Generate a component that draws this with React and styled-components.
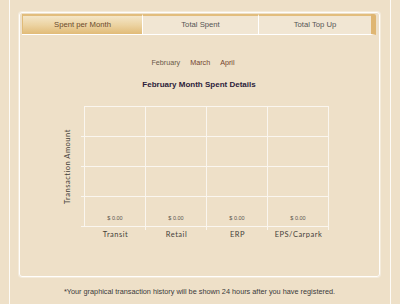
import React, { useState } from "react";
import styled, { createGlobalStyle } from "styled-components";

const GlobalStyle = createGlobalStyle`
  html, body {
    margin: 0;
    padding: 0;
    background: #eee0c8;
    font-family: "Liberation Sans", Arial, sans-serif;
  }
`;

const tabs = ["Spent per Month", "Total Spent", "Total Top Up"];
const months = ["February", "March", "April"];
const categories = ["Transit", "Retail", "ERP", "EPS/Carpark"];

const App = () => {
  const [active, setActive] = useState(0);
  const [month, setMonth] = useState("February");

  return (
    <>
      <GlobalStyle />
      <Page>
        <Frame>
          <Box>
            <TabRow>
              {tabs.map((t, i) => (
                <Tab key={t} $active={active === i} onClick={() => setActive(i)}>
                  {t}
                </Tab>
              ))}
            </TabRow>

            <Months>
              {months.map((m) => (
                <MonthLink
                  key={m}
                  $current={month === m}
                  onClick={() => setMonth(m)}
                >
                  {m}
                </MonthLink>
              ))}
            </Months>

            <Title>{month} Month Spent Details</Title>

            <Chart>
              <AxisLabel>Transaction Amount</AxisLabel>
              <div>
                <Plot>
                  {[0, 1, 2, 3].map((row) =>
                    categories.map((c, col) => (
                      <Cell
                        key={row + c}
                        $bottom={row === 3}
                        $first={col === 0}
                      >
                        {row === 3 && <Value>$ 0.00</Value>}
                      </Cell>
                    ))
                  )}
                </Plot>
                <Labels>
                  {categories.map((c) => (
                    <Label key={c}>{c}</Label>
                  ))}
                </Labels>
              </div>
            </Chart>
          </Box>

          <Note>
            *Your graphical transaction history will be shown 24 hours after
            you have registered.
          </Note>
        </Frame>
      </Page>
    </>
  );
};

const Page = styled.div`
  height: 304px;
  padding: 0 9px;
  box-sizing: border-box;
  display: flex;
`;

const Frame = styled.div`
  flex: 1;
  display: flex;
  flex-direction: column;
  border-left: 1px solid rgba(255, 255, 255, 0.85);
  border-right: 1px solid rgba(255, 255, 255, 0.85);
  padding: 12px 10px 0 9px;
`;

const Box = styled.div`
  height: 262px;
  flex-shrink: 0;
  border: 1px solid rgba(255, 255, 255, 0.95);
  box-shadow: 0 0 0 1px rgba(255, 255, 255, 0.35);
  border-radius: 3px;
  padding: 1px 3px 0 2px;
`;

const TabRow = styled.div`
  display: grid;
  grid-template-columns: 120px 116px 1fr;
  border-right: 5px solid #dfb672;
  border-bottom: 1px solid #fff;
  border-top-right-radius: 2px;
`;

const Tab = styled.div`
  height: 18px;
  border-top: 2px solid #e2bd7d;
  border-left: 1px solid ${(p) => (p.$active ? "#e0bb78" : "#fff")};
  background: ${(p) =>
    p.$active
      ? "linear-gradient(to bottom, #f4e6c8 0%, #ecd3a2 50%, #e1bb77 100%)"
      : "#f1e6d3"};
  color: ${(p) => (p.$active ? "#6a4a2c" : "#555")};
  font-size: 7.7px;
  line-height: 18px;
  text-align: center;
  cursor: pointer;
`;

const Months = styled.div`
  margin-top: 23px;
  display: flex;
  justify-content: center;
  gap: 10px;
  padding-right: 12px;
  font-size: 7.2px;
  line-height: 10px;
`;

const MonthLink = styled.span`
  color: ${(p) => (p.$current ? "#6a5a48" : "#74442f")};
  cursor: pointer;
`;

const Title = styled.div`
  margin-top: 12px;
  text-align: center;
  font-size: 8px;
  font-weight: bold;
  line-height: 10px;
  color: #2c1c3a;
`;

const Chart = styled.div`
  margin-top: 16px;
  display: flex;
  padding-left: 41px;
  gap: 11px;
  font-family: Lato, "DejaVu Sans", sans-serif;
`;

const AxisLabel = styled.div`
  width: 10px;
  height: 121px;
  writing-mode: vertical-rl;
  transform: rotate(180deg);
  text-align: center;
  font-size: 7.5px;
  letter-spacing: 0.5px;
  line-height: 10px;
  color: #45403a;
`;

const Plot = styled.div`
  display: grid;
  grid-template-columns: repeat(4, 61px);
  grid-auto-rows: 30px;
  border-left: 1px solid rgba(255, 255, 255, 0.7);
  border-top: 1px solid rgba(255, 255, 255, 0.7);
`;

const Cell = styled.div`
  position: relative;
  border-right: 1px solid rgba(255, 255, 255, 0.7);
  border-bottom: 1px solid rgba(255, 255, 255, 0.7);
  display: flex;
  align-items: flex-end;
  justify-content: center;

  &::after {
    content: "";
    display: ${(p) => (p.$bottom ? "block" : "none")};
    position: absolute;
    right: -1px;
    bottom: -4px;
    width: 1px;
    height: 3px;
    background: rgba(255, 255, 255, 0.7);
  }

  &::before {
    content: "";
    display: ${(p) => (p.$first ? "block" : "none")};
    position: absolute;
    left: -4px;
    bottom: -1px;
    width: 3px;
    height: 1px;
    background: rgba(255, 255, 255, 0.7);
  }
`;

const Value = styled.span`
  font-family: "Liberation Sans", Arial, sans-serif;
  font-size: 5.5px;
  line-height: 8px;
  padding-bottom: 4px;
  color: #5a5550;
`;

const Labels = styled.div`
  display: grid;
  grid-template-columns: repeat(4, 61px);
  padding-left: 1px;
  margin-top: 3px;
`;

const Label = styled.div`
  text-align: center;
  font-size: 7.5px;
  letter-spacing: 0.5px;
  line-height: 10px;
  color: #45403a;
`;

const Note = styled.div`
  margin-top: 10px;
  text-align: center;
  font-size: 7.3px;
  line-height: 10px;
  color: #3a3a3a;
`;

export default App;
